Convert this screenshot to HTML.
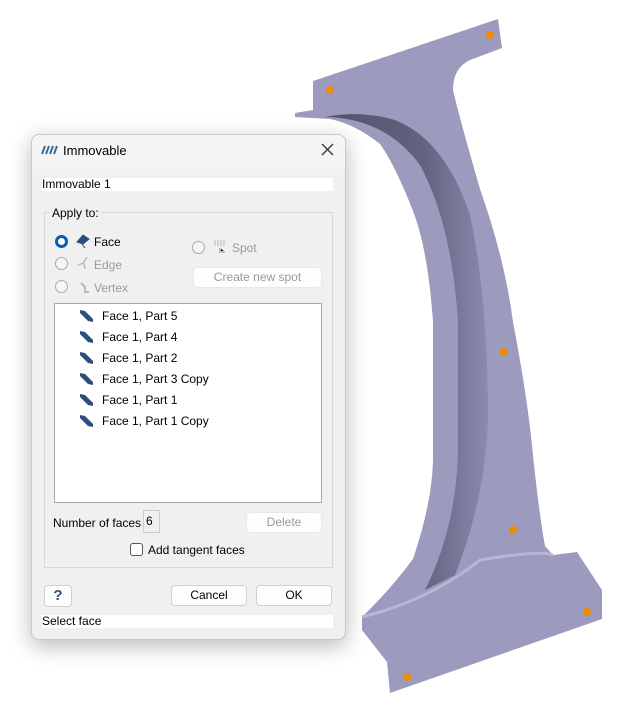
<!DOCTYPE html>
<html><head><style>
body{margin:0;width:634px;height:713px;background:#fff;position:relative;overflow:hidden;font-family:"Liberation Sans",sans-serif;font-size:12px;color:#000}
.a{position:absolute}
.dlg{left:31px;top:134px;width:313px;height:504px;background:#f0f0f0;border:1px solid #c8c8c8;border-radius:8px;box-shadow:0 6px 22px rgba(0,0,0,.28)}
.inp{background:#fff}
.btn{background:#fdfdfd;border:1px solid #d0d0d0;border-radius:4px;text-align:center;line-height:19px}
.dis{color:#9a9a9a}
.rad{width:11px;height:11px;border:1px solid #aaa;border-radius:50%;background:#f6f6f6}
.it{position:absolute;left:47px;white-space:nowrap}
.ic{position:absolute;left:-22px;top:1px;width:13px;height:12px}
</style></head><body>
<svg class="a" style="left:0;top:0" width="634" height="713">
<defs><linearGradient id="g" x1="0" y1="0" x2="1" y2="0"><stop offset="0" stop-color="#4a4a62"/><stop offset="0.6" stop-color="#5c5c78"/><stop offset="1" stop-color="#8a88ac"/></linearGradient></defs>
<path d="M313,81 L498,19 L502,48 L470,60 Q453,68 453,90 Q460,120 480,189 Q505,260 513,322 Q528,400 533,456 Q540,520 545,546 L553,555 L577,552 L602,590 L602,619 L390,693 L387,662 L362,630 L362,617 Q390,590 413,559 Q433,500 433,456 L433,322 Q428,250 413,211 Q395,165 380,144 Q355,124 330,119 L295,117 L295,113 L313,110 Z" fill="#9c9abd"/>
<path d="M325,117 Q385,118 420,165 Q452,225 458,322 L458,456 Q455,530 425,590 L455,575 Q485,500 488,420 Q488,300 470,215 Q445,140 395,120 Q360,110 325,117 Z" fill="url(#g)" opacity=".9"/>
<path d="M362,617 Q430,600 480,560 Q540,550 553,555" fill="none" stroke="#b8b6d6" stroke-width="3"/>
<g fill="#f08a00"><circle cx="330" cy="90" r="4"/><circle cx="490" cy="35" r="4"/><circle cx="504" cy="352" r="4"/><circle cx="513" cy="530" r="4"/><circle cx="587" cy="612" r="4"/><circle cx="407" cy="677" r="4"/></g>
</svg>
<div class="a dlg">
 <div class="a" style="left:0;top:0;width:313px;height:34px;background:#f5f5f5;border-radius:8px 8px 0 0"></div>
 <svg class="a" style="left:9px;top:10px" width="18" height="10"><g stroke="#3a6a9a" stroke-width="2"><path d="M1,9 L4,1 M5,9 L8,1 M9,9 L12,1 M13,9 L16,1"/></g></svg>
 <div class="a" style="left:31px;top:8px;font-size:13px">Immovable</div>
 <svg class="a" style="left:289px;top:8px" width="13" height="13"><path d="M1,1 L12,12 M12,1 L1,12" stroke="#333" stroke-width="1.3"/></svg>
 <div class="a inp" style="left:10px;top:43px;width:291px;height:13px;line-height:13px">Immovable 1</div>
 <div class="a" style="left:12px;top:77px;width:287px;height:354px;border:1px solid #d8d8d8"></div>
 <div class="a" style="left:18px;top:71px;background:#f0f0f0;padding:0 2px">Apply to:</div>
 <div class="a rad" style="left:23px;top:100px;width:7px;height:7px;border:3px solid #0a5cb8;background:#fff"></div>
 <svg class="a" style="left:44px;top:99px" width="14" height="14"><path d="M1,8 L7,1 L13,5 L7,10 Z M6,10 L9,14" fill="#2b4f7a" stroke="#2b4f7a"/></svg>
 <div class="a" style="left:62px;top:100px">Face</div>
 <div class="a rad" style="left:23px;top:122px"></div>
 <div class="a dis" style="left:62px;top:123px">Edge</div>
 <svg class="a" style="left:44px;top:120px" width="14" height="14"><path d="M2,10 Q8,9 11,2 M8,8 L9,14" fill="none" stroke="#b0bccb" stroke-width="1.5"/></svg>
 <div class="a rad" style="left:23px;top:145px"></div>
 <svg class="a" style="left:47px;top:146px" width="12" height="12"><path d="M2,2 L6,6 L6,11 L10,11" fill="none" stroke="#b0bccb" stroke-width="2"/></svg>
 <div class="a dis" style="left:62px;top:146px">Vertex</div>
 <div class="a rad" style="left:160px;top:106px"></div>
 <svg class="a" style="left:181px;top:104px" width="14" height="14"><g stroke="#b8c0cc" stroke-width="1.2"><path d="M2,1 V7 M5,1 V7 M8,1 V7 M11,1 V7"/><path d="M7,9 V13 H12" stroke-width="2"/></g></svg>
 <div class="a dis" style="left:200px;top:106px">Spot</div>
 <div class="a btn dis" style="left:161px;top:132px;width:127px;height:19px;border-color:#e8e8e8">Create new spot</div>
 <div class="a" style="left:22px;top:168px;width:266px;height:198px;background:#fff;border:1px solid #a8a8a8">
  <div class="it" style="top:5px"><svg class="ic" viewBox="0 0 13 12"><path d="M0,0 L5,1 L13,9 L13,12 L8,11 L0,3Z" fill="#2b4f7a"/></svg>Face 1, Part 5</div>
  <div class="it" style="top:26px"><svg class="ic" viewBox="0 0 13 12"><path d="M0,0 L5,1 L13,9 L13,12 L8,11 L0,3Z" fill="#2b4f7a"/></svg>Face 1, Part 4</div>
  <div class="it" style="top:47px"><svg class="ic" viewBox="0 0 13 12"><path d="M0,0 L5,1 L13,9 L13,12 L8,11 L0,3Z" fill="#2b4f7a"/></svg>Face 1, Part 2</div>
  <div class="it" style="top:68px"><svg class="ic" viewBox="0 0 13 12"><path d="M0,0 L5,1 L13,9 L13,12 L8,11 L0,3Z" fill="#2b4f7a"/></svg>Face 1, Part 3 Copy</div>
  <div class="it" style="top:89px"><svg class="ic" viewBox="0 0 13 12"><path d="M0,0 L5,1 L13,9 L13,12 L8,11 L0,3Z" fill="#2b4f7a"/></svg>Face 1, Part 1</div>
  <div class="it" style="top:110px"><svg class="ic" viewBox="0 0 13 12"><path d="M0,0 L5,1 L13,9 L13,12 L8,11 L0,3Z" fill="#2b4f7a"/></svg>Face 1, Part 1 Copy</div>
 </div>
 <div class="a" style="left:21px;top:381px">Number of faces</div>
 <div class="a" style="left:111px;top:375px;width:13px;height:21px;border:1px solid #ccc;line-height:21px;padding-left:2px">6</div>
 <div class="a btn dis" style="left:214px;top:377px;width:74px;height:19px;border-color:#e8e8e8">Delete</div>
 <div class="a" style="left:98px;top:408px;width:11px;height:11px;border:1px solid #555;border-radius:3px;background:#fff"></div>
 <div class="a" style="left:116px;top:408px">Add tangent faces</div>
 <div class="a btn" style="left:12px;top:450px;width:26px;height:20px;font-weight:bold;font-size:15px;color:#2b4f7a">?</div>
 <div class="a btn" style="left:139px;top:450px;width:74px;height:19px">Cancel</div>
 <div class="a btn" style="left:224px;top:450px;width:74px;height:19px">OK</div>
 <div class="a inp" style="left:10px;top:480px;width:291px;height:13px;line-height:13px">Select face</div>
</div>
</body></html>
